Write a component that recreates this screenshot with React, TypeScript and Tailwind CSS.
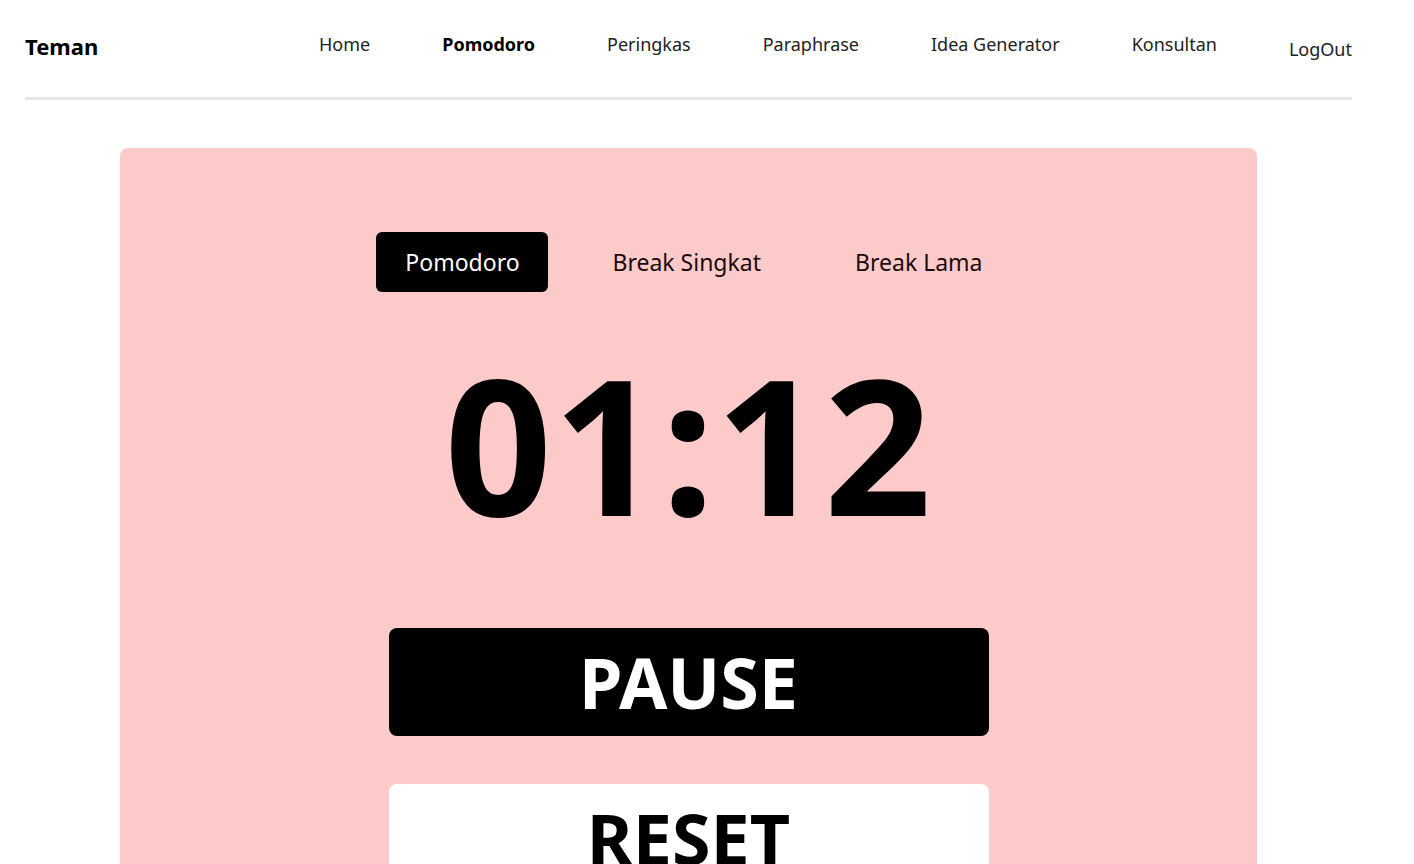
export default function App() {
  const links = ['Home', 'Pomodoro', 'Peringkas', 'Paraphrase', 'Idea Generator', 'Konsultan'];
  return (
    <div className="min-h-screen bg-white text-black font-['Noto_Sans','Open_Sans',sans-serif]">
      <nav className="mx-[25px] w-[1327px] h-[100px] flex items-center border-b-[3px] border-[#e6e6e6]">
        <div className="text-[22px] font-bold -mt-1">Teman</div>
        <ul className="ml-auto flex items-center gap-[72px] text-[18px] text-[#222]">
          {links.map((l) => (
            <li key={l} className={l === 'Pomodoro' ? 'font-bold text-black -mt-2' : '-mt-2'}>
              {l}
            </li>
          ))}
          <li className="mt-0.5">LogOut</li>
        </ul>
      </nav>

      <main className="pt-[48px] pl-[120px]">
        <section className="w-[1137px] h-[760px] bg-[#fdcaca] rounded-lg flex flex-col items-center pt-[84px]">
          <div className="flex items-center gap-[64px] text-[23px] text-[#1a0a0a] mr-[18px]">
            <button className="w-[172px] h-[60px] bg-black text-white rounded-md">Pomodoro</button>
            <button>Break Singkat</button>
            <button className="ml-[30px]">Break Lama</button>
          </div>

          <div className="mt-[26px] h-[250px] flex items-center text-[188px] font-bold leading-none tracking-[1px]">
            01:12
          </div>

          <button className="mt-[60px] w-[600px] h-[108px] bg-black text-white rounded-lg text-[70px] font-bold leading-none">
            PAUSE
          </button>
          <button className="mt-[48px] w-[600px] h-[108px] bg-white text-black rounded-lg text-[70px] font-bold leading-none">
            RESET
          </button>
        </section>
      </main>
    </div>
  );
}
